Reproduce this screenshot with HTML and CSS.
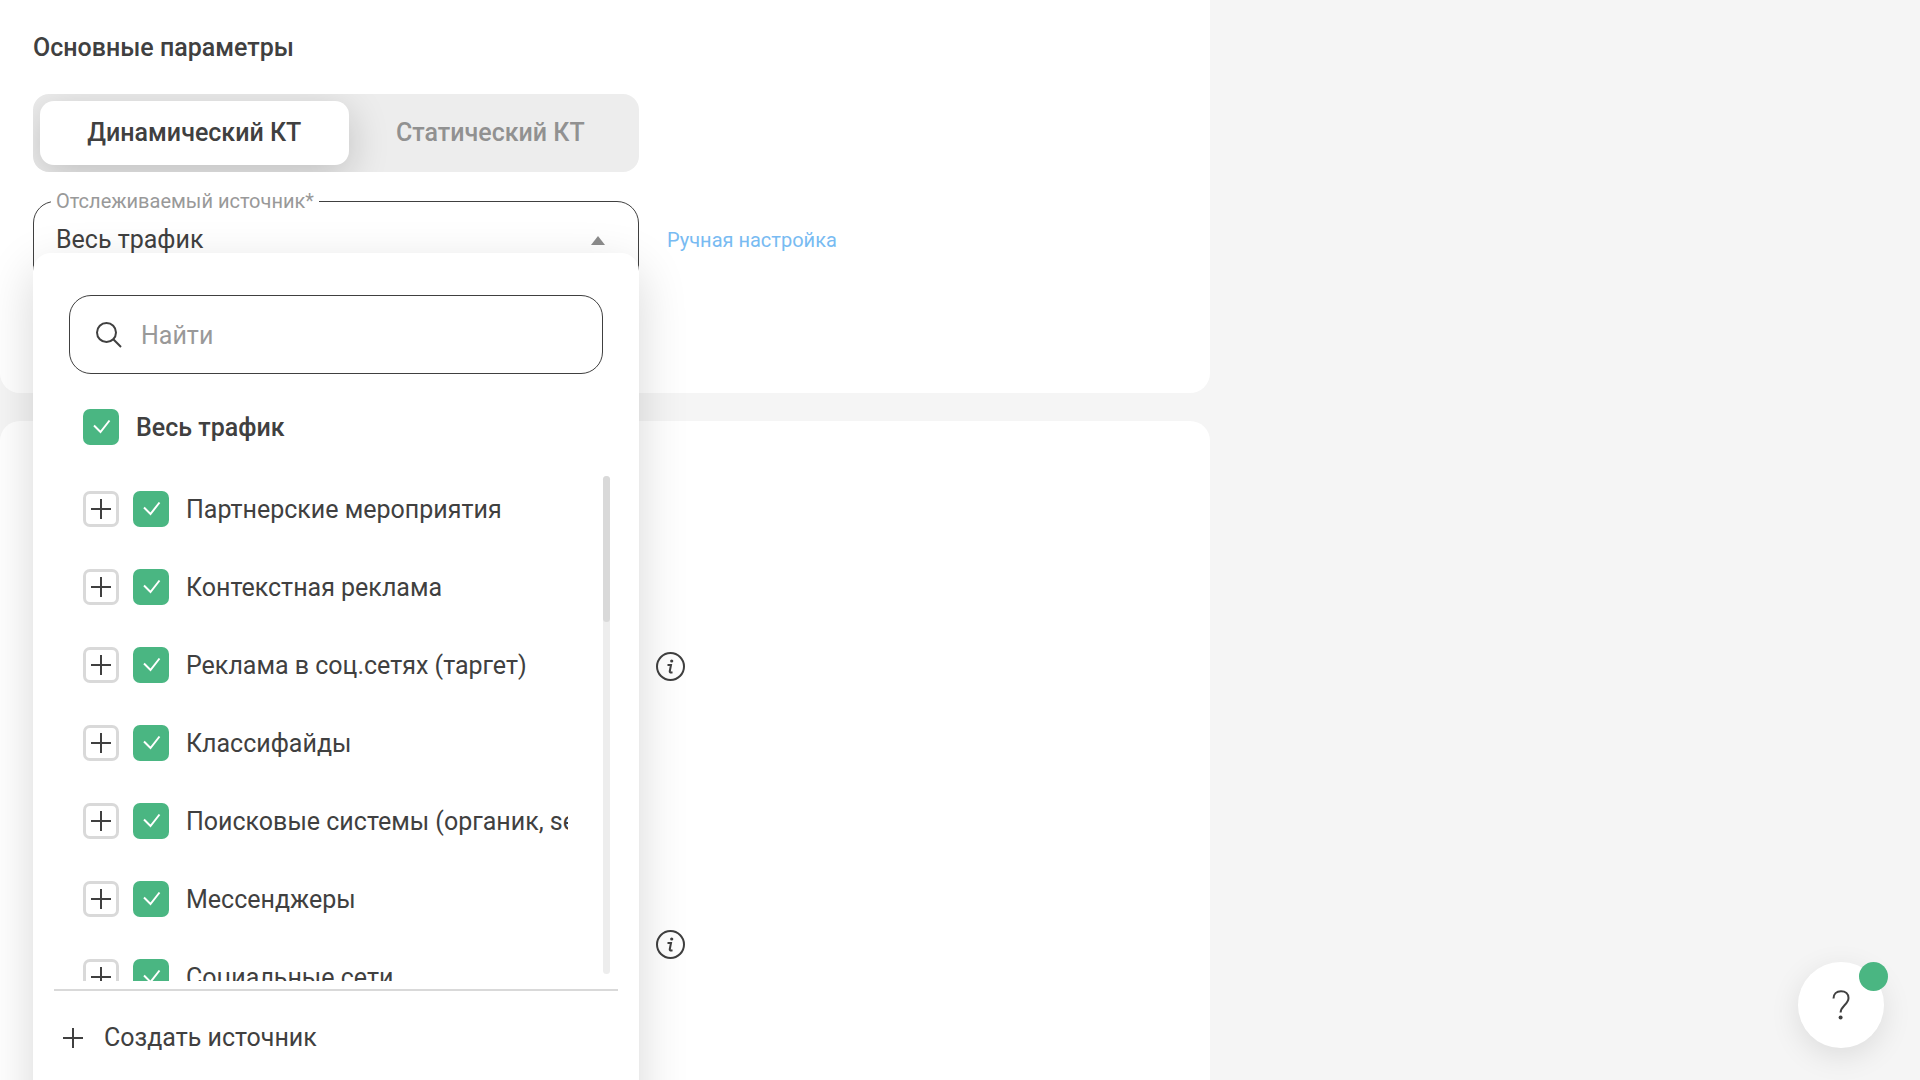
FILE: index.html
```html
<!DOCTYPE html>
<html lang="ru">
	<head>
		<meta charset="utf-8">
		<title>Основные параметры</title>

		<meta content="width=device-width, initial-scale=1" name="viewport">

		<link rel="stylesheet" href="styles.css">
	</head>
	<body>
		<svg class="sprite" aria-hidden="true">
			<symbol id="icon-check" viewBox="0 0 36 36">
				<path d="M11 16.5l6.500 6.500l9-11.500" />
			</symbol>
			<symbol id="icon-plus" viewBox="0 0 20 20">
				<path d="M0 10h20M10 0v20" />
			</symbol>
			<symbol id="icon-info" viewBox="0 0 29 29">
				<circle cx="14.500" cy="14.500" r="13.500" />
				<path d="M11.500 13h3.500l-1.300 6.500q-.2 1.500 2.800.8" />
				<circle class="dot" cx="15.700" cy="9" r="1.600" />
			</symbol>
		</svg>

		<main>
			<section class="card card-main">
				<h2>Основные параметры</h2>

				<div class="toggle">
					<button type="button" class="active">Динамический КТ</button>
					<button type="button">Статический КТ</button>
				</div>

				<div class="source-row">
					<div class="source">
						<fieldset class="field">
							<legend><label for="source">Отслеживаемый источник*</label></legend>
							<div class="field-value">
								<select id="source">
									<option>Весь трафик</option>
								</select>
								<span class="arrow"></span>
							</div>
						</fieldset>

						<div class="dropdown">
							<div class="search">
								<svg class="icon" viewBox="0 0 26 26" width="26" height="26"><circle cx="10.500" cy="10.500" r="9.500" /><path d="M17.300 17.300L25 25" /></svg>
								<input type="text" placeholder="Найти" aria-label="Найти">
							</div>

							<label class="option option-all">
								<span class="check"><input type="checkbox" checked><svg><use href="#icon-check" /></svg></span>
								<span class="name">Весь трафик</span>
							</label>

							<div class="list">
								<ul>
									<li>
										<button type="button" class="expand" aria-label="Раскрыть"><svg><use href="#icon-plus" /></svg></button>
										<label class="option">
											<span class="check"><input type="checkbox" checked><svg><use href="#icon-check" /></svg></span>
											<span class="name">Партнерские мероприятия</span>
										</label>
									</li>
									<li>
										<button type="button" class="expand" aria-label="Раскрыть"><svg><use href="#icon-plus" /></svg></button>
										<label class="option">
											<span class="check"><input type="checkbox" checked><svg><use href="#icon-check" /></svg></span>
											<span class="name">Контекстная реклама</span>
										</label>
									</li>
									<li>
										<button type="button" class="expand" aria-label="Раскрыть"><svg><use href="#icon-plus" /></svg></button>
										<label class="option">
											<span class="check"><input type="checkbox" checked><svg><use href="#icon-check" /></svg></span>
											<span class="name">Реклама в соц.сетях (таргет)</span>
										</label>
									</li>
									<li>
										<button type="button" class="expand" aria-label="Раскрыть"><svg><use href="#icon-plus" /></svg></button>
										<label class="option">
											<span class="check"><input type="checkbox" checked><svg><use href="#icon-check" /></svg></span>
											<span class="name">Классифайды</span>
										</label>
									</li>
									<li>
										<button type="button" class="expand" aria-label="Раскрыть"><svg><use href="#icon-plus" /></svg></button>
										<label class="option">
											<span class="check"><input type="checkbox" checked><svg><use href="#icon-check" /></svg></span>
											<span class="name">Поисковые системы (органик, seo)</span>
										</label>
									</li>
									<li>
										<button type="button" class="expand" aria-label="Раскрыть"><svg><use href="#icon-plus" /></svg></button>
										<label class="option">
											<span class="check"><input type="checkbox" checked><svg><use href="#icon-check" /></svg></span>
											<span class="name">Мессенджеры</span>
										</label>
									</li>
									<li>
										<button type="button" class="expand" aria-label="Раскрыть"><svg><use href="#icon-plus" /></svg></button>
										<label class="option">
											<span class="check"><input type="checkbox" checked><svg><use href="#icon-check" /></svg></span>
											<span class="name">Социальные сети</span>
										</label>
									</li>
								</ul>
								<div class="scrollbar"><div class="thumb"></div></div>
							</div>

							<button type="button" class="create"><svg><use href="#icon-plus" /></svg>Создать источник</button>
						</div>
					</div>

					<a href="#" class="manual">Ручная настройка</a>
				</div>
			</section>

			<section class="card card-extra">
				<button type="button" class="info" aria-label="Подсказка"><svg><use href="#icon-info" /></svg></button>
				<button type="button" class="info" aria-label="Подсказка"><svg><use href="#icon-info" /></svg></button>
			</section>
		</main>

		<button type="button" class="help" aria-label="Помощь">
			<svg class="icon" viewBox="0 0 18 30" width="18" height="30"><path d="M1.500 8.500C1.500 4 4.500 1.200 9 1.200s7.500 2.600 7.500 6.800c0 3-1.500 4.800-4 7.300C10 17.800 8.600 19 8.600 22.500" /><circle class="dot" cx="8.600" cy="27.500" r="2" /></svg>
			<span class="badge"></span>
		</button>
	</body>
</html>
```
FILE: styles.css
```css
* {
	box-sizing: border-box;
}

body {
	margin: 0;
	min-height: 100vh;
	overflow: hidden;

	background-color: #f5f5f5;
	color: #404040;

	font-family: Roboto, sans-serif;
	font-size: 25px;
	line-height: 30px;
}

button, input, select {
	font: inherit;
	color: inherit;
	border: none;
	padding: 0;
	background: none;
	outline: none;
}

button {
	cursor: pointer;
}

svg {
	display: block;
	fill: none;
	stroke: #404040;
	stroke-width: 2px;
}

svg .dot {
	fill: #404040;
	stroke: none;
}

.sprite {
	position: absolute;
	width: 0;
	height: 0;
}

main {
	display: flex;
	flex-direction: column;
	gap: 28px;

	width: 63%;
	height: 100vh;
}

.card {
	background-color: #fff;
	border-radius: 20px;
	padding: 33px;
}

.card-main {
	border-top-left-radius: 0;
	border-top-right-radius: 0;
	padding-bottom: 102px;
}

.card-extra {
	flex: 1;

	display: flex;
	flex-direction: column;
	align-items: flex-start;
	gap: 249px;

	padding-top: 231px;
	padding-left: 656px;
	border-bottom-left-radius: 0;
	border-bottom-right-radius: 0;
}

h2 {
	margin: 0 0 31px;
	font-size: 25px;
	font-weight: 500;
}

/* toggle */

.toggle {
	display: flex;

	max-width: 606px;
	height: 78px;
	padding: 7px;

	background-color: #ededed;
	border-radius: 16px;
	overflow: hidden;
}

.toggle button {
	flex: 1 1 auto;
	font-weight: 500;
	color: #919191;
	border-radius: 14px;
}

.toggle .active {
	background-color: #fff;
	color: #404040;
	box-shadow: 0 10px 40px rgba(0, 0, 0, 0.2);
}

/* source field */

.source-row {
	display: flex;
	align-items: center;
	gap: 28px;
	margin-top: 17px;
}

.source {
	position: relative;
	flex: 0 1 606px;
}

.field {
	margin: 0;
	min-width: 0;
	height: 102px;
	padding: 0 33px 0 17px;

	border: 1px solid #404040;
	border-radius: 22px;
}

.field legend {
	padding: 0 5px;

	font-size: 20px;
	line-height: 24px;
	color: #999;
}

.field-value {
	display: flex;
	align-items: center;
	height: 54px;
	padding-left: 5px;
}

.field-value select {
	flex: 1;
	appearance: none;
}

.arrow {
	border: 7px solid transparent;
	border-top: none;
	border-bottom: 9px solid #8c8c8c;
}

.manual {
	font-size: 20px;
	line-height: 24px;
	color: #78bbf2;
	text-decoration: none;
}

/* dropdown */

.dropdown {
	position: absolute;
	z-index: 10;
	top: 64px;
	left: 0;
	right: 0;

	padding: 42px 21px 40px;

	background-color: #fff;
	border-radius: 18px;
	box-shadow: 0 16px 50px rgba(0, 0, 0, 0.16);
}

.search {
	display: flex;
	align-items: center;
	gap: 19px;

	height: 79px;
	margin: 0 15px;
	padding: 0 26px;

	border: 1px solid #404040;
	border-radius: 22px;
}

.search input {
	flex: 1;
	min-width: 0;
	padding-top: 2px;
}

.search input::placeholder {
	color: #999;
	opacity: 1;
}

.option {
	display: flex;
	align-items: center;
	gap: 17px;
	min-width: 0;
}

.option-all {
	margin: 35px 29px 31px;
	font-weight: 500;
}

.check {
	display: grid;
	flex: none;
}

.check input,
.check svg {
	grid-area: 1 / 1;
	width: 36px;
	height: 36px;
	margin: 0;
}

.check input {
	appearance: none;
	border-radius: 7px;
	border: 3px solid #d9d9d9;
}

.check input:checked {
	background-color: #4ab682;
	border: none;
}

.check svg {
	stroke: #fff;
	pointer-events: none;
}

.name {
	padding-top: 1px;
	overflow: hidden;
	white-space: nowrap;
}

.list {
	display: flex;
	justify-content: space-between;

	height: 505px;
	padding: 0 8px 0 29px;
}

.list ul {
	width: 485px;
	margin: 0;
	padding: 15px 0 0;

	list-style: none;
	overflow: hidden;
}

.list li {
	display: flex;
	align-items: center;
	gap: 14px;
	margin-bottom: 42px;
}

.expand {
	flex: none;

	display: grid;
	place-items: center;

	width: 36px;
	height: 36px;

	border: 3px solid #d9d9d9;
	border-radius: 7px;
}

.expand svg,
.create svg {
	width: 20px;
	height: 20px;
}

.scrollbar {
	width: 7px;
	height: 498px;
	background-color: #ededed;
	border-radius: 4px;
}

.thumb {
	height: 146px;
	background-color: #d9d9d9;
	border-radius: 4px;
}

.create {
	display: flex;
	align-items: center;
	gap: 21px;

	width: 100%;
	margin-top: 8px;
	padding: 32px 9px;

	border-top: 2px solid #d9d9d9;
}

/* hints */

.info svg {
	width: 29px;
	height: 29px;
}

.help {
	position: fixed;
	right: 36px;
	bottom: 32px;

	display: grid;
	place-items: center;

	width: 86px;
	height: 86px;

	background-color: #fff;
	border-radius: 50%;
	box-shadow: 0 8px 30px rgba(0, 0, 0, 0.1);
}

.badge {
	position: absolute;
	top: 0;
	right: -4px;

	width: 29px;
	height: 29px;

	background-color: #4ab682;
	border-radius: 50%;
}
```
